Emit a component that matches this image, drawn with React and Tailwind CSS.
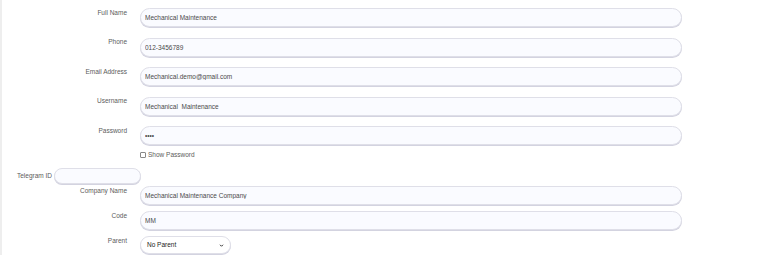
const fields = [
  { label: 'Full Name', value: 'Mechanical Maintenance' },
  { label: 'Phone', value: '012-3456789' },
  { label: 'Email Address', value: 'Mechanical.demo@gmail.com' },
  { label: 'Username', value: 'Mechanical_Maintenance' },
];

const inputCls =
  'block h-[19px] w-[542px] rounded-full border border-[#dfdfe8] bg-[#fafbff] px-[4px] py-0 text-[6.5px] leading-normal text-[#4a4a4a] shadow-[0_1px_0_#d3d3e0] outline-none';

const Row = ({ label, children, className = '' }) => (
  <div className={`flex items-start ${className}`}>
    <label className="mt-[0.5px] block w-[125px] shrink-0 text-right text-[6.5px] leading-[8px] text-[#5c5c5c]">{label}</label>
    <div className="ml-[13px]">{children}</div>
  </div>
);

export default function App() {
  return (
    <div
      className="h-[255px] w-[760px] overflow-hidden border-l-2 border-[#eeeeee] bg-white pt-[8px] leading-none"
      style={{ fontFamily: '"Liberation Sans", Arial, sans-serif' }}
    >
      {fields.map((f, i) => (
        <Row key={f.label} label={f.label} className={i > 0 ? 'mt-[10.5px]' : ''}>
          <input className={inputCls} defaultValue={f.value} readOnly />
        </Row>
      ))}
      <Row label="Password" className="mt-[10.5px]">
        <input className={inputCls} type="password" defaultValue="1234" readOnly />
        <div className="mt-[6px] flex items-center gap-[2px] text-[6.5px] leading-[8px] text-[#5c5c5c]">
          <span className="inline-block h-[6px] w-[6px] rounded-[1px] border border-[#888] bg-white" />
          <span>Show Password</span>
        </div>
      </Row>
      <div className="mt-[9px] flex items-center pl-[15px]">
        <span className="text-[6.5px] text-[#5c5c5c]">Telegram ID</span>
        <input
          className="ml-[2px] block h-[16px] w-[87px] rounded-full border border-[#dfdfe8] bg-[#fafbff] shadow-[0_1px_0_#d3d3e0] outline-none"
          readOnly
        />
      </div>
      <Row label="Company Name" className="mt-[2px]">
        <input className={inputCls} defaultValue="Mechanical Maintenance Company" readOnly />
      </Row>
      <Row label="Code" className="mt-[6px]">
        <input className={inputCls} defaultValue="MM" readOnly />
      </Row>
      <Row label="Parent" className="mt-[6px]">
        <div className="flex h-[18px] w-[91px] items-center justify-between rounded-full border border-[#dfdfe8] bg-white px-[6px] text-[6.5px] text-[#222] shadow-[0_1px_0_#d3d3e0]">
          <span>No Parent</span>
          <svg width="5" height="5" viewBox="0 0 10 10" fill="none" stroke="#333" strokeWidth="2">
            <path d="M2 3.5 5 6.5 8 3.5" />
          </svg>
        </div>
      </Row>
    </div>
  );
}
